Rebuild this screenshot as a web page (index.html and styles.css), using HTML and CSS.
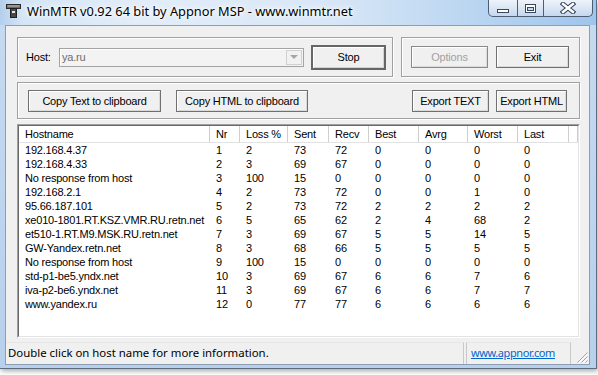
FILE: index.html
```html
<!DOCTYPE html>
<html>
<head>
<meta charset="utf-8">
<title>WinMTR</title>
<link rel="stylesheet" href="styles.css">
</head>
<body>
<div class="window">
  <div class="titlebar">
    <svg class="app-icon" width="15" height="14" viewBox="0 0 15 14">
      <rect x="0.5" y="0.5" width="14" height="4" fill="#6a6a6a" stroke="#2b2b2b"/>
      <rect x="1.5" y="1.5" width="12" height="1" fill="#c4c4c4"/>
      <rect x="4.5" y="4.5" width="6" height="9" fill="#474747" stroke="#1f1f1f"/>
      <rect x="6" y="7" width="3" height="2" fill="#e6e6e6"/>
    </svg>
    <span class="title">WinMTR v0.92 64 bit by Appnor MSP - www.winmtr.net</span>
    <div class="caption">
      <div class="cbtn cmin">
        <svg width="14" height="6" viewBox="0 0 14 6"><rect x="1.5" y="1.5" width="11" height="3" fill="#fff" stroke="#3a475a"/></svg>
      </div>
      <div class="cbtn cmax">
        <svg width="13" height="11" viewBox="0 0 13 11"><rect x="1.5" y="1.5" width="10" height="8" fill="#fff" stroke="#3a475a"/><rect x="3.5" y="4.5" width="6" height="3" fill="#c9d9ee" stroke="#3a475a"/></svg>
      </div>
      <div class="cbtn cclose">
        <svg width="16" height="12" viewBox="0 0 16 12"><path d="M3 2 L13 10 M13 2 L3 10" stroke="#3a475a" stroke-width="4.6" stroke-linecap="square"/><path d="M3 2 L13 10 M13 2 L3 10" stroke="#fff" stroke-width="2.4" stroke-linecap="square"/></svg>
      </div>
    </div>
  </div>
  <div class="client">
    <div class="dialog">
      <div class="row1">
        <div class="group host-group">
          <span class="host-label">Host:</span>
          <div class="combo">
            <span class="combo-text">ya.ru</span>
            <span class="combo-btn"><span class="tri"></span></span>
          </div>
          <button class="btn btn-default">Stop</button>
        </div>
        <div class="group opt-group">
          <button class="btn btn-disabled w77">Options</button>
          <button class="btn w73">Exit</button>
        </div>
      </div>
      <div class="group copy-group">
        <button class="btn w133">Copy Text to clipboard</button>
        <button class="btn w132">Copy HTML to clipboard</button>
        <button class="btn w77 push">Export TEXT</button>
        <button class="btn w71">Export HTML</button>
      </div>
      <div class="listview">
        <div class="lv-inner">
          <div class="lv-row lv-head">
            <span>Hostname</span><span>Nr</span><span>Loss %</span><span>Sent</span><span>Recv</span><span>Best</span><span>Avrg</span><span>Worst</span><span>Last</span><span></span>
          </div>
          <div class="lv-row"><span>192.168.4.37</span><span>1</span><span>2</span><span>73</span><span>72</span><span>0</span><span>0</span><span>0</span><span>0</span></div>
          <div class="lv-row"><span>192.168.4.33</span><span>2</span><span>3</span><span>69</span><span>67</span><span>0</span><span>0</span><span>0</span><span>0</span></div>
          <div class="lv-row"><span>No response from host</span><span>3</span><span>100</span><span>15</span><span>0</span><span>0</span><span>0</span><span>0</span><span>0</span></div>
          <div class="lv-row"><span>192.168.2.1</span><span>4</span><span>2</span><span>73</span><span>72</span><span>0</span><span>0</span><span>1</span><span>0</span></div>
          <div class="lv-row"><span>95.66.187.101</span><span>5</span><span>2</span><span>73</span><span>72</span><span>2</span><span>2</span><span>2</span><span>2</span></div>
          <div class="lv-row"><span>xe010-1801.RT.KSZ.VMR.RU.retn.net</span><span>6</span><span>5</span><span>65</span><span>62</span><span>2</span><span>4</span><span>68</span><span>2</span></div>
          <div class="lv-row"><span>et510-1.RT.M9.MSK.RU.retn.net</span><span>7</span><span>3</span><span>69</span><span>67</span><span>5</span><span>5</span><span>14</span><span>5</span></div>
          <div class="lv-row"><span>GW-Yandex.retn.net</span><span>8</span><span>3</span><span>68</span><span>66</span><span>5</span><span>5</span><span>5</span><span>5</span></div>
          <div class="lv-row"><span>No response from host</span><span>9</span><span>100</span><span>15</span><span>0</span><span>0</span><span>0</span><span>0</span><span>0</span></div>
          <div class="lv-row"><span>std-p1-be5.yndx.net</span><span>10</span><span>3</span><span>69</span><span>67</span><span>6</span><span>6</span><span>7</span><span>6</span></div>
          <div class="lv-row"><span>iva-p2-be6.yndx.net</span><span>11</span><span>3</span><span>69</span><span>67</span><span>6</span><span>6</span><span>7</span><span>7</span></div>
          <div class="lv-row"><span>www.yandex.ru</span><span>12</span><span>0</span><span>77</span><span>77</span><span>6</span><span>6</span><span>6</span><span>6</span></div>
        </div>
      </div>
    </div>
    <div class="statusbar">
      <div class="panel panel-main">Double click on host name for more information.</div>
      <div class="panel panel-link"><a class="link" href="#">www.appnor.com</a></div>
      <div class="grip">
        <svg width="12" height="12" viewBox="0 0 12 12">
          <path d="M11.5 1.5 L1.5 11.5 M11.5 5.5 L5.5 11.5 M11.5 9.5 L9.5 11.5" stroke="#a3a3a3" stroke-width="1"/>
          <path d="M12 2.5 L2.5 12 M12 6.5 L6.5 12 M12 10.5 L10.5 12" stroke="#fff" stroke-width="1"/>
        </svg>
      </div>
    </div>
  </div>
</div>
</body>
</html>
```
FILE: styles.css
```css
* { box-sizing: border-box; margin: 0; padding: 0; }
html, body { width: 598px; height: 375px; overflow: hidden; background: #ffffff; }
body {
  font-family: "Liberation Sans", Arial, sans-serif;
  font-size: 11px;
  letter-spacing: -0.2px;
  color: #000;
}

.window {
  width: 597px;
  height: 369px;
  display: flex;
  flex-direction: column;
  background: linear-gradient(180deg, #c6dbf1 0%, #b7d0ec 100%);
  border-right: 1px solid #5a6b82;
  border-bottom: 1px solid #5a6b82;
  box-shadow: 1px 2px 5px rgba(0, 0, 0, 0.35);
}

.titlebar {
  height: 25px;
  flex: none;
  display: flex;
  align-items: flex-start;
  background: linear-gradient(90deg, #b4cfec 0px, #d4e5f6 22px, #e2edf9 140px, #d8e7f7 330px, #bdd7f1 460px, #9ec5ec 597px);
}
.app-icon { margin: 4px 0 0 6px; flex: none; }
.title {
  margin: 3px 0 0 6px;
  font-family: "Noto Sans", "Open Sans", sans-serif;
  font-size: 12.8px;
  line-height: 16px;
  letter-spacing: 0;
  white-space: nowrap;
  text-shadow: 0 0 6px #fff, 0 0 3px #fff, 0 0 10px #fff;
}
.caption {
  margin-left: auto;
  margin-right: 3px;
  display: flex;
  height: 17px;
  border: 1px solid #4d5d73;
  border-top: 0;
  border-radius: 0 0 5px 5px;
  overflow: hidden;
  background: linear-gradient(180deg, #eef3fa 0%, #dbe6f4 50%, #c5d7ee 100%);
}
.cbtn { height: 16px; display: flex; align-items: center; justify-content: center; }
.cbtn + .cbtn { border-left: 1px solid #4d5d73; }
.cmin { width: 28px; padding-top: 6px; }
.cmax { width: 26px; }
.cclose { width: 49px; }

.client {
  margin: 0 6px 0 5px;
  height: 340px;
  flex: none;
  background: #f0f0f0;
  border: 1px solid #8e9db1;
  display: flex;
  flex-direction: column;
}
.dialog {
  flex: 1;
  display: flex;
  flex-direction: column;
  gap: 5px;
  padding: 11px 9px 4px 11px;
  min-height: 0;
}
.row1 { display: flex; gap: 8px; height: 40px; flex: none; }
.group {
  border: 1px solid #a0a0a0;
  box-shadow: inset 1px 1px 0 #fff, 1px 1px 0 #fff;
  display: flex;
  align-items: center;
}
.host-group { width: 376px; padding-left: 8px; }
.host-label { width: 33px; flex: none; }
.combo {
  width: 245px;
  height: 19px;
  flex: none;
  display: flex;
  align-items: center;
  border: 1px solid #a3a3a3;
  background: #f3f3f3;
  box-shadow: inset 1px 1px 0 #fff;
}
.combo-text { padding-left: 2px; color: #6d6d6d; }
.combo-btn {
  margin-left: auto;
  margin-right: 1px;
  width: 16px;
  height: 15px;
  border: 1px solid #d0d0d0;
  background: #f2f2f2;
  display: flex;
  align-items: center;
  justify-content: center;
}
.tri {
  width: 0; height: 0;
  border-left: 4px solid transparent;
  border-right: 4px solid transparent;
  border-top: 4px solid #a6a6a6;
}
.opt-group { flex: 1; padding-left: 9px; gap: 8px; }
.copy-group { height: 37px; flex: none; padding: 0 12px 0 10px; gap: 15px; }
.copy-group .push { margin-left: auto; }
.copy-group .push + .btn { margin-left: -8px; }

.btn {
  font: inherit;
  letter-spacing: inherit;
  color: #000;
  height: 22px;
  flex: none;
  border: 1px solid #707070;
  background: #f0f0f0;
  box-shadow: inset 1px 1px 0 #ffffff, inset -1px -1px 0 #dadada;
  padding: 0;
  cursor: default;
}
.btn-default {
  width: 75px;
  height: 25px;
  margin-left: 7px;
  border: 2px solid #666;
  box-shadow: inset 1px 1px 0 #fff, inset -1px -1px 0 #d2d2d2;
}
.btn-disabled { color: #a2a2a2; border-color: #8a8a8a; }
.w77 { width: 77px; }
.w73 { width: 73px; }
.w71 { width: 71px; }
.w133 { width: 133px; }
.w132 { width: 132px; }

.listview {
  flex: 1;
  min-height: 0;
  border: 1px solid;
  border-color: #a0a0a0 #ffffff #ffffff #a0a0a0;
}
.lv-inner {
  height: 100%;
  background: #fff;
  border: 1px solid;
  border-color: #696969 #e3e3e3 #e3e3e3 #696969;
  overflow: hidden;
}
.lv-row {
  display: grid;
  grid-template-columns: 191px 30px 48px 41px 40px 50px 49px 50px 51px 1fr;
  height: 14px;
  line-height: 14px;
  white-space: nowrap;
}
.lv-row span { padding-left: 6px; overflow: hidden; }
.lv-head { height: 17px; line-height: 17px; border-bottom: 1px solid #e2e2e2; }
.lv-head span { border-right: 1px solid #cfcfcf; }

.statusbar {
  height: 22px;
  flex: none;
  display: flex;
  font-family: "Noto Sans", "Open Sans", sans-serif;
  font-size: 11.4px;
  letter-spacing: 0;
  line-height: 20px;
}
.panel { border-top: 1px solid #e6e6e6; white-space: nowrap; overflow: hidden; }
.panel-main { width: 458px; padding-left: 2px; border-right: 1px solid #c8c8c8; }
.panel-link { width: 105px; margin-left: 2px; padding-left: 4px; border-left: 1px solid #c8c8c8; border-right: 1px solid #c8c8c8; }
.link { color: #0066cc; text-decoration: underline; font-size: 11px; letter-spacing: -0.4px; }
.grip { flex: 1; display: flex; align-items: flex-end; justify-content: flex-end; padding: 0 1px 1px 0; }
```
